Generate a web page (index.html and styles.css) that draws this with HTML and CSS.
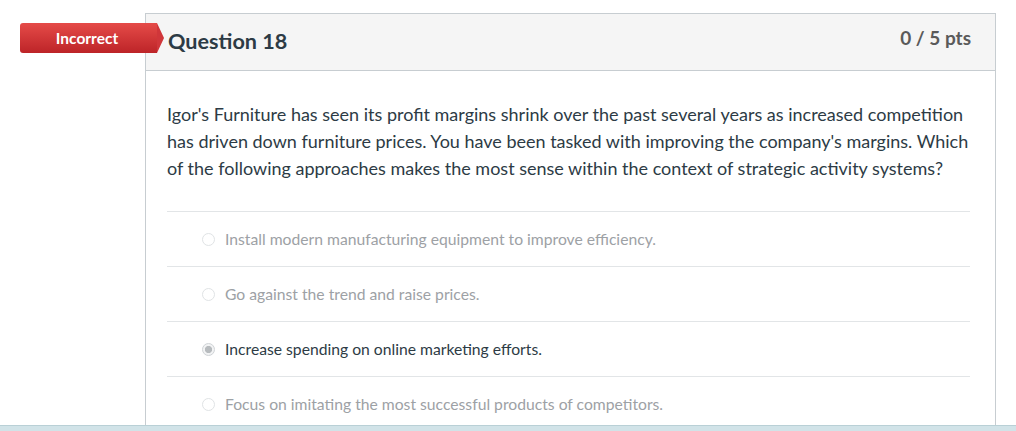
FILE: index.html
```html
<!DOCTYPE html>
<html>
<head>
<meta charset="utf-8">
<link rel="stylesheet" href="styles.css">
</head>
<body>
<div class="page">
  <div class="gutter">
    <div class="badge">Incorrect</div>
  </div>
  <div class="card">
    <div class="card-head">
      <h2 class="q-title">Question 18</h2>
      <div class="pts">0 / 5 pts</div>
    </div>
    <div class="card-body">
      <p class="q-text">Igor's Furniture has seen its profit margins shrink over the past several years as increased competition has driven down furniture prices. You have been tasked with improving the company's margins. Which of the following approaches makes the most sense within the context of strategic activity systems?</p>
      <div class="answers">
        <div class="answer"><span class="radio"></span><span class="label">Install modern manufacturing equipment to improve efficiency.</span></div>
        <div class="answer"><span class="radio"></span><span class="label">Go against the trend and raise prices.</span></div>
        <div class="answer selected"><span class="radio"></span><span class="label">Increase spending on online marketing efforts.</span></div>
        <div class="answer"><span class="radio"></span><span class="label">Focus on imitating the most successful products of competitors.</span></div>
      </div>
    </div>
  </div>
</div>
<div class="footer-bar"></div>
</body>
</html>
```
FILE: styles.css
```css
html, body {
  margin: 0;
  padding: 0;
  height: 431px;
  overflow: hidden;
  background: #fff;
  font-family: Lato, "Open Sans", sans-serif;
}
.page {
  display: flex;
  padding-top: 13px;
  height: 412px;
}
.gutter {
  width: 145px;
  flex: none;
  padding-top: 10px;
  position: relative;
  z-index: 1;
}
.badge {
  position: relative;
  margin-left: 20px;
  width: 137px;
  height: 30px;
  box-sizing: border-box;
  padding-right: 3px;
  background: linear-gradient(#e54b48, #bd2428);
  border-radius: 3px 0 0 3px;
  color: #fff;
  font-weight: bold;
  font-size: 15.5px;
  line-height: 30px;
  text-align: center;
}
.badge::after {
  content: "";
  position: absolute;
  right: -7px;
  top: 0;
  border-top: 15px solid transparent;
  border-bottom: 15px solid transparent;
  border-left: 7px solid #d0363a;
}
.card {
  width: 851px;
  border: 1px solid #c7cdd1;
  border-bottom: none;
  box-sizing: border-box;
  flex: none;
}
.card-head {
  background: #f5f5f5;
  height: 56px;
  border-bottom: 1px solid #c7cdd1;
  display: flex;
  justify-content: space-between;
  padding: 0 24px 0 22px;
}
.q-title {
  margin: 0;
  font-size: 21.6px;
  font-weight: bold;
  color: #2d3b45;
  padding-top: 14px;
}
.pts {
  font-size: 19px;
  font-weight: bold;
  color: #5a5a5a;
  padding-top: 12px;
}
.card-body {
  padding: 30px 25px 0 21px;
}
.q-text {
  margin: 0 0 29px;
  font-size: 18px;
  line-height: 27px;
  color: #2d3b45;
}
.answer {
  border-top: 1px solid #e2e5e7;
  height: 54px;
  display: flex;
  align-items: center;
  padding-left: 35px;
  font-size: 15.7px;
  color: #9da1a5;
}
.radio {
  width: 13px;
  height: 13px;
  border: 1px solid #e0e3e5;
  border-radius: 50%;
  margin-right: 10px;
  box-sizing: border-box;
  background: #fff;
  flex: none;
}
.answer.selected {
  color: #2d3b45;
}
.answer.selected .radio {
  border-color: #cfd3d6;
  background: radial-gradient(circle, #b7bbbe 0 3.3px, #f2f3f4 3.9px);
}
.footer-bar {
  height: 5px;
  background: #d1e3e8;
  border-top: 1px solid #b9d0d6;
}
```
